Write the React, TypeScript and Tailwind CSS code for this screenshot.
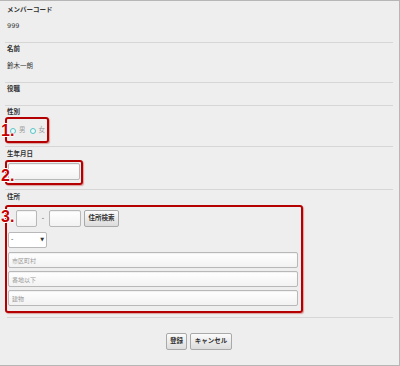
const font = { fontFamily: '"DejaVu Sans", "Noto Sans CJK JP", sans-serif' };

function Label({ children }: { children: React.ReactNode }) {
  return <div className="pl-[2px] text-[6.5px] leading-[10px] font-bold text-[#333]">{children}</div>;
}

function Value({ children }: { children: React.ReactNode }) {
  return <div className="pl-[2px] text-[6.5px] leading-[10px] text-[#3a3a3a]">{children}</div>;
}

function Divider({ className = "" }: { className?: string }) {
  return <div className={"h-px bg-[#d5d6d5] " + className} />;
}

function Marker({ n, className }: { n: string; className: string }) {
  return (
    <span
      className={
        "absolute text-[16px] leading-[16px] font-bold text-[#c80000] [text-shadow:1px_0_0_#fff,-1px_0_0_#fff,0_1px_0_#fff,0_-1px_0_#fff] " +
        className
      }
      style={{ fontFamily: '"Liberation Sans", sans-serif' }}
    >
      {n}
    </span>
  );
}

const box =
  "relative border-2 border-[#b40000] rounded-[3px] shadow-[1px_1px_1px_rgba(200,60,60,0.45)]";
const field =
  "border border-[#b8b8b8] rounded-[2px] bg-[linear-gradient(#ffffff,#f2f2f2)] shadow-[inset_0_1px_1px_rgba(0,0,0,0.06)]";
const btn =
  "flex items-center justify-center border border-[#a9a9a9] rounded-[2px] bg-[linear-gradient(#fbfbfb,#dcdcdc)] text-[6.5px] font-bold text-[#333]";

function Radio() {
  return <span className="inline-block w-[6px] h-[6px] rounded-full border border-[#55c4c4] bg-[#eef8f8]" />;
}

export default function App() {
  return (
    <div
      className="w-[400px] h-[366px] bg-[#edeeed] border-t border-r border-b border-[#b6b6b6] pl-[5px] pr-[6px] flex flex-col"
      style={font}
    >
      <div className="pt-[4px]">
        <Label>メンバーコード</Label>
      </div>
      <div className="mt-[6px]">
        <Value>999</Value>
      </div>
      <Divider className="mt-[11px]" />

      <div className="mt-px">
        <Label>名前</Label>
      </div>
      <div className="mt-[7px]">
        <Value>鈴木一朗</Value>
      </div>
      <Divider className="mt-[11px]" />

      <div className="mt-px">
        <Label>役職</Label>
      </div>
      <Divider className="mt-[11px]" />

      <div className="mt-px">
        <Label>性別</Label>
      </div>
      <div className={box + " w-[44px] h-[26px] flex items-center pl-[3px] pt-[2px]"}>
        <div className="flex items-center text-[6.5px] text-[#999]">
          <Radio />
          <span className="ml-[3px]">男</span>
          <span className="ml-[4px] flex">
            <Radio />
          </span>
          <span className="ml-[3px]">女</span>
        </div>
        <Marker n="1." className="left-[-6px] top-[4px]" />
      </div>
      <Divider className="mt-[3px]" />

      <div className="mt-[2px]">
        <Label>生年月日</Label>
      </div>
      <div className={box + " mt-px w-[78px] h-[25px] pt-px px-px"}>
        <div className={field + " w-[72px] h-[17px]"} />
        <Marker n="2." className="left-[-6px] top-[6px]" />
      </div>
      <Divider className="mt-[4px]" />

      <div className="mt-[2px]">
        <Label>住所</Label>
      </div>
      <div className={box + " mt-[3px] w-[298px] h-[108px] pt-[3px] pl-px"}>
        <div className="flex items-center pl-[8px] h-[17px]">
          <div className={field + " w-[21px] h-[17px]"} />
          <span className="w-[12px] text-center text-[6.5px] text-[#444]">-</span>
          <div className={field + " w-[32px] h-[17px]"} />
          <button className={btn + " ml-[3px] w-[35px] h-[17px]"}>住所検索</button>
        </div>
        <div className="mt-[5px] w-[39px] h-[16px] border border-[#b8b8b8] rounded-[2px] bg-white flex items-center justify-between px-[2px] text-[6.5px] text-[#333]">
          <span>-</span>
          <span className="text-[5px]">▼</span>
        </div>
        <div className="mt-[4px] flex flex-col gap-[3px] w-[290px]">
          {["市区町村", "番地以下", "建物"].map((p) => (
            <div key={p} className={field + " h-[16px] flex items-center pl-[3px] text-[6px] text-[#9a9a9a]"}>
              {p}
            </div>
          ))}
        </div>
        <Marker n="3." className="left-[-6px] top-[2px]" />
      </div>
      <Divider className="mt-[4px] ml-[2px]" />

      <div className="mt-[15px] flex justify-center gap-[3px]">
        <button className={btn + " w-[21px] h-[17px]"}>登録</button>
        <button className={btn + " w-[42px] h-[17px]"}>キャンセル</button>
      </div>
    </div>
  );
}
